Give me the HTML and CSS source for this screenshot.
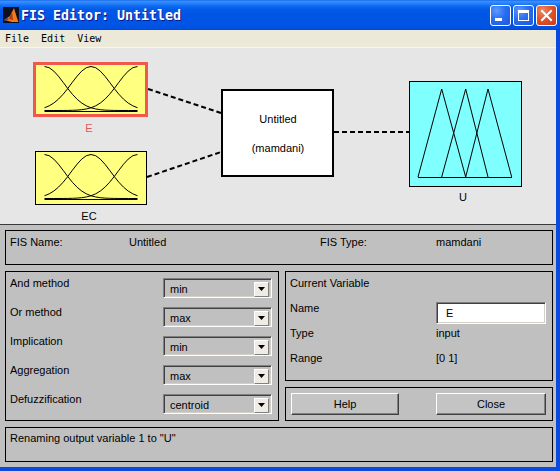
FILE: index.html
```html
<!DOCTYPE html>
<html>
<head>
<meta charset="utf-8">
<title>FIS Editor: Untitled</title>
<link rel="stylesheet" href="styles.css">
</head>
<body>
<div class="window">
  <div class="titlebar">
    <svg class="app-icon" viewBox="0 0 16 16" width="16" height="16">
      <rect width="16" height="16" fill="#0c1020"/>
      <path d="M1 13 L4 11 L7 9 L9 5 L11 1 L12.5 6 L14 11 L15.5 15 L9 15 L5 14 Z" fill="#f07a20"/>
      <path d="M7 9 L9 5 L10 13 L6 12 Z" fill="#b03a10"/>
      <path d="M1 13 L4 11 L6 12 L3 14 Z" fill="#3050a0"/>
    </svg>
    <span class="title">FIS Editor: Untitled</span>
    <div class="caption-buttons">
      <div class="cap-btn blue">
        <svg viewBox="0 0 21 21" width="21" height="21"><rect x="5" y="13" width="7" height="3" fill="#fff"/></svg>
      </div>
      <div class="cap-btn blue">
        <svg viewBox="0 0 21 21" width="21" height="21"><rect x="5.5" y="5.5" width="10" height="10" fill="none" stroke="#fff" stroke-width="1"/><rect x="5" y="5" width="11" height="3" fill="#fff"/></svg>
      </div>
      <div class="cap-btn red">
        <svg viewBox="0 0 21 21" width="21" height="21"><path d="M6 6 L15 15 M15 6 L6 15" stroke="#fff" stroke-width="2" stroke-linecap="square"/></svg>
      </div>
    </div>
  </div>
  <div class="frame">
    <div class="client">
      <div class="menubar">
        <span class="menu-item">File</span>
        <span class="menu-item">Edit</span>
        <span class="menu-item">View</span>
      </div>
      <div class="diagram">
        <svg class="diagram-svg" width="556" height="176" viewBox="0 48 556 176">
          <defs>
            <g id="gauss" fill="none" stroke="#000">
              <path vector-effect="non-scaling-stroke" d="M0 0 L5 2.73 L10 10.5 L15 22.09 L20 35.83 L25 50 L30 63.15 L35 74.3 L40 83.05 L45 89.42 L50 93.75 L55 96.51 L60 98.16 L65 99.08 L70 99.56 L75 99.81 L80 99.92 L90 99.99 L100 100"/>
              <path vector-effect="non-scaling-stroke" d="M0 93.75 L5 89.42 L10 83.05 L15 74.3 L20 63.15 L25 50 L30 35.83 L35 22.09 L40 10.5 L45 2.73 L50 0 L55 2.73 L60 10.5 L65 22.09 L70 35.83 L75 50 L80 63.15 L85 74.3 L90 83.05 L95 89.42 L100 93.75"/>
              <path vector-effect="non-scaling-stroke" d="M100 0 L95 2.73 L90 10.5 L85 22.09 L80 35.83 L75 50 L70 63.15 L65 74.3 L60 83.05 L55 89.42 L50 93.75 L45 96.51 L40 98.16 L35 99.08 L30 99.56 L25 99.81 L20 99.92 L10 99.99 L0 100"/>
              <path vector-effect="non-scaling-stroke" d="M0 102.27 H100"/>
            </g>
          </defs>
          <g stroke="#000" stroke-width="2" stroke-dasharray="5 3">
            <line x1="148" y1="89" x2="221" y2="113"/>
            <line x1="147" y1="177" x2="221" y2="152"/>
            <line x1="334" y1="132" x2="409" y2="132"/>
          </g>
          <rect x="34.5" y="63.5" width="112" height="52" fill="#ffff80" stroke="#f2574c" stroke-width="3"/>
          <g transform="translate(44.5 66.5) scale(0.93 0.44)"><use href="#gauss"/></g>
          <text class="lbl lbl-sel" x="89" y="132" text-anchor="middle">E</text>

          <rect x="35.5" y="151.5" width="111" height="53" fill="#ffff80" stroke="#000" stroke-width="1"/>
          <g transform="translate(44.5 154.5) scale(0.93 0.44)"><use href="#gauss"/></g>
          <text class="lbl" x="89" y="220" text-anchor="middle">EC</text>

          <rect x="222" y="90" width="111" height="86" fill="#fff" stroke="#000" stroke-width="2"/>
          <text class="lbl" x="278" y="123" text-anchor="middle">Untitled</text>
          <text class="lbl" x="278" y="152" text-anchor="middle">(mamdani)</text>

          <rect x="409.5" y="81.5" width="112" height="105" fill="#80ffff" stroke="#000" stroke-width="1"/>
          <g fill="none" stroke="#000" stroke-width="1">
            <path d="M418 177 L441.7 89 L465.7 177"/>
            <path d="M441.7 177 L465.7 89 L488 177"/>
            <path d="M465.7 177 L488 89 L511.7 177"/>
            <path d="M418 177.5 H512"/>
          </g>
          <text class="lbl" x="463" y="201" text-anchor="middle">U</text>
        </svg>
      </div>
      <div class="lower">
        <div class="panel fis-info">
          <span>FIS Name:</span>
          <span>Untitled</span>
          <span>FIS Type:</span>
          <span>mamdani</span>
        </div>
        <div class="middle">
          <div class="panel methods">
            <span class="m-label">And method</span>
            <div class="select"><span class="sel-text">min</span><span class="sel-btn"><svg viewBox="0 0 7 4" width="7" height="4"><path d="M0 0 H7 L3.5 4 Z" fill="#000"/></svg></span></div>
            <span class="m-label">Or method</span>
            <div class="select"><span class="sel-text">max</span><span class="sel-btn"><svg viewBox="0 0 7 4" width="7" height="4"><path d="M0 0 H7 L3.5 4 Z" fill="#000"/></svg></span></div>
            <span class="m-label">Implication</span>
            <div class="select"><span class="sel-text">min</span><span class="sel-btn"><svg viewBox="0 0 7 4" width="7" height="4"><path d="M0 0 H7 L3.5 4 Z" fill="#000"/></svg></span></div>
            <span class="m-label">Aggregation</span>
            <div class="select"><span class="sel-text">max</span><span class="sel-btn"><svg viewBox="0 0 7 4" width="7" height="4"><path d="M0 0 H7 L3.5 4 Z" fill="#000"/></svg></span></div>
            <span class="m-label">Defuzzification</span>
            <div class="select"><span class="sel-text">centroid</span><span class="sel-btn"><svg viewBox="0 0 7 4" width="7" height="4"><path d="M0 0 H7 L3.5 4 Z" fill="#000"/></svg></span></div>
          </div>
          <div class="right-col">
            <div class="panel current-var">
              <span class="cv-title">Current Variable</span>
              <span class="cv-label">Name</span>
              <div class="text-input">E</div>
              <span class="cv-label">Type</span>
              <span class="cv-label">input</span>
              <span class="cv-label">Range</span>
              <span class="cv-label">[0 1]</span>
            </div>
            <div class="panel actions">
              <div class="push-btn help">Help</div>
              <div class="push-btn close">Close</div>
            </div>
          </div>
        </div>
        <div class="panel status">Renaming output variable 1 to "U"</div>
      </div>
    </div>
  </div>
</div>
</body>
</html>
```

FILE: styles.css
```css
html, body {
  margin: 0;
  padding: 0;
}

body {
  width: 560px;
  height: 471px;
  overflow: hidden;
  background: #0b49df;
  font-family: "Liberation Sans", Arial, sans-serif;
  font-size: 11px;
  color: #000;
}

.window {
  display: flex;
  flex-direction: column;
  width: 560px;
  height: 471px;
}

.titlebar {
  height: 30px;
  box-sizing: border-box;
  display: flex;
  align-items: center;
  padding: 0 3px 0 3px;
  background: linear-gradient(to bottom, #0a5be6 0px, #3d92fb 1px, #2a85fa 3px, #0c6bf2 6px, #0259e8 10px, #0054e3 17px, #0055e6 24px, #0052e0 28px, #0046d6 30px);
}

.app-icon {
  display: block;
  flex: none;
  margin-right: 2px;
}

.title {
  flex: 1;
  font-family: "DejaVu Sans Mono", "Liberation Mono", monospace;
  font-weight: bold;
  font-size: 13.3px;
  color: #fff;
  text-shadow: 1px 1px 0 #0b1c8c;
  white-space: nowrap;
  padding-top: 1px;
}

.caption-buttons {
  display: flex;
  gap: 2px;
}

.cap-btn {
  width: 21px;
  height: 21px;
  box-sizing: border-box;
  border: 1px solid #fff;
  border-radius: 3px;
  overflow: hidden;
}

.cap-btn svg {
  display: block;
  margin: -1px;
}

.cap-btn.blue {
  background: radial-gradient(circle at 30% 25%, #5d9bff 0%, #2a6ef0 45%, #1b58dc 100%);
}

.cap-btn.red {
  background: radial-gradient(circle at 30% 25%, #f08a6a 0%, #e0542c 45%, #c8391a 100%);
}

.frame {
  flex: 1;
  display: flex;
  padding: 0 4px 4px 0;
}

.client {
  width: 556px;
  display: flex;
  flex-direction: column;
  background: #c0c0c0;
}

.menubar {
  height: 17px;
  border-bottom: 1px solid #f6f5ef;
  background: #ece9d8;
  display: flex;
  align-items: center;
  gap: 12px;
  padding-left: 5px;
  font-family: "DejaVu Sans Mono", "Liberation Mono", monospace;
  font-size: 10px;
}

.diagram {
  height: 176px;
  background: #e6e6e6;
  border-bottom: 1px solid #3a3a3a;
}

.diagram-svg {
  display: block;
}

.lbl {
  font-family: "Liberation Sans", Arial, sans-serif;
  font-size: 11px;
  fill: #000;
}

.lbl-sel {
  fill: #e0585a;
}

.lower {
  flex: 1;
  display: flex;
  flex-direction: column;
  gap: 6px;
  padding: 5px 3px 0 5px;
}

.panel {
  box-sizing: border-box;
  border: 1px solid #000;
  background: #c0c0c0;
  line-height: 13px;
}

.fis-info {
  height: 35px;
  display: grid;
  grid-template-columns: 119px 191px 116px auto;
  align-items: start;
  padding: 5px 0 0 4px;
}

.middle {
  height: 150px;
  display: grid;
  grid-template-columns: 274px 268px;
  gap: 6px;
}

.methods {
  display: grid;
  grid-template-columns: 153px 109px;
  grid-auto-rows: 21px;
  row-gap: 8px;
  align-content: start;
  padding: 5px 6px 0 4px;
}

.m-label {
  align-self: start;
}

.select {
  margin-top: 1px;
  height: 20px;
  box-sizing: border-box;
  display: flex;
  align-items: center;
  background: #c0c0c0;
  border: 1px solid;
  border-color: #808080 #ffffff #ffffff #808080;
  box-shadow: inset 1px 1px 0 #404040, inset -1px -1px 0 #d4d0c8;
}

.sel-text {
  flex: 1;
  padding-left: 6px;
  padding-top: 2px;
}

.sel-btn {
  width: 15px;
  height: 15px;
  margin-right: 2px;
  margin-top: 2px;
  box-sizing: border-box;
  display: flex;
  align-items: center;
  justify-content: center;
  background: #eeece4;
  border: 1px solid;
  border-color: #ffffff #808080 #808080 #ffffff;
}

.sel-btn svg {
  display: block;
}

.right-col {
  display: flex;
  flex-direction: column;
  gap: 6px;
}

.current-var {
  height: 110px;
  display: grid;
  grid-template-columns: 146px 110px;
  grid-auto-rows: 25px;
  align-content: start;
  padding: 5px 0 0 4px;
}

.cv-title {
  grid-column: 1 / 3;
}

.cv-label {
  align-self: start;
}

.text-input {
  height: 22px;
  box-sizing: border-box;
  background: #fff;
  border: 1px solid;
  border-color: #808080 #ffffff #ffffff #808080;
  box-shadow: inset 1px 1px 0 #404040, inset -1px -1px 0 #d4d0c8;
  padding: 4px 0 0 9px;
}

.actions {
  height: 34px;
  display: flex;
  gap: 37px;
  padding: 5px 0 0 5px;
}

.push-btn {
  height: 22px;
  box-sizing: border-box;
  display: flex;
  align-items: center;
  justify-content: center;
  background: #c4c4c4;
  border: 1px solid;
  border-color: #ffffff #404040 #404040 #ffffff;
  box-shadow: inset -1px -1px 0 #808080;
}

.push-btn.help {
  width: 108px;
}

.push-btn.close {
  width: 110px;
}

.status {
  height: 35px;
  padding: 4px 0 0 4px;
}
```
